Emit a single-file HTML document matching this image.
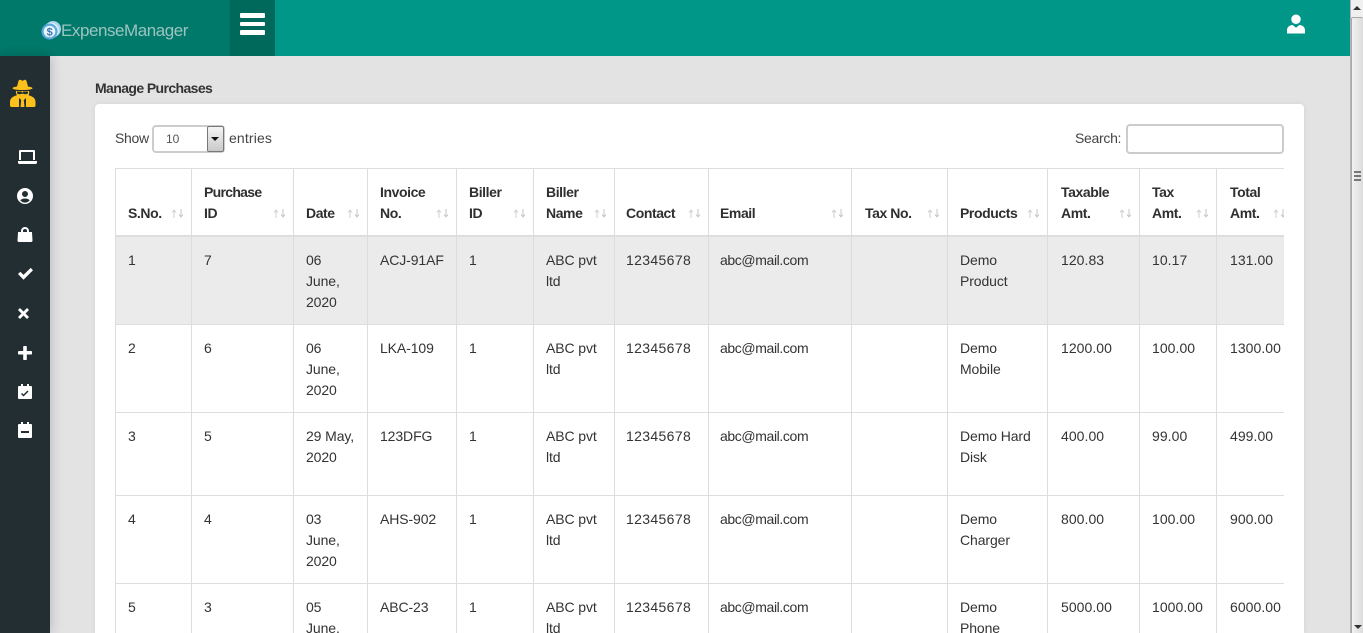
<!DOCTYPE html>
<html><head><meta charset="utf-8"><title>Manage Purchases</title>
<style>
*{box-sizing:border-box}
html,body{margin:0;padding:0;width:1363px;height:633px;overflow:hidden;background:#e3e3e3}
#root{position:relative;width:1363px;height:633px;overflow:hidden;background:#e3e3e3;font-family:"Liberation Sans",sans-serif;font-size:14px;color:#333;letter-spacing:-.3px}
.abs{position:absolute}
#top{left:0;top:0;width:1350px;height:56px;background:#009688}
#logo{left:0;top:0;width:230px;height:56px;background:#00796b}
#ham{left:230px;top:0;width:45px;height:56px;background:#00695c}
#ham i{position:absolute;left:10px;width:25px;height:4.5px;background:#fff;border-radius:1px}
#side{left:0;top:56px;width:50px;height:577px;background:#232e33;box-shadow:0 0 12px rgba(0,0,0,.22)}
#card{left:95px;top:104px;width:1209px;height:529px;background:#fff;border-radius:4px 4px 0 0;box-shadow:0 0 6px rgba(0,0,0,.08)}
#wrap{left:115px;top:168px;width:1169px;height:465px;overflow:hidden;border-left:1px solid #ddd}
table{border-collapse:separate;border-spacing:0;table-layout:fixed;width:1191px}
th,td{padding:0 0 0 12px;border-right:1px solid #ddd;text-align:left;font-size:14px;line-height:21px}
th{height:69px;border-top:1px solid #ddd;border-bottom:2px solid #ddd;vertical-align:bottom;padding-bottom:11px;position:relative;font-weight:bold;color:#2f2f2f;letter-spacing:-.42px}
td{border-bottom:1px solid #ddd;vertical-align:top;padding-top:13px;color:#333;letter-spacing:-.1px}
tr.g td{background:#ebebeb}
th svg{position:absolute;right:7px;bottom:17px;width:13px;height:9px}
td:nth-child(7){letter-spacing:.35px;padding-left:11px}
td:nth-child(8){letter-spacing:-.38px;padding-left:11px}
th:nth-child(7),th:nth-child(8){padding-left:11px}
td:nth-child(11),th:nth-child(11),td:nth-child(13),th:nth-child(13){padding-left:13px}
td:nth-child(11),td:nth-child(12),td:nth-child(13){letter-spacing:.05px}
th:nth-child(9){padding-left:13px}
#sb{left:1350px;top:0;width:13px;height:633px;background:#f0f0f0;border-left:1px solid #b4b4b4}
</style></head>
<body>
<div id="root">
<svg width="0" height="0" style="position:absolute"><defs><symbol id="sa" viewBox="0 0 13 9"><path d="M3 9V1.500M1 3.500L3 1l2 2.500" fill="none" stroke="#cfcfcf" stroke-width="1"/><path d="M10 0v7.500M8 5.500L10 8l2-2.500" fill="none" stroke="#c4c4c4" stroke-width="1"/></symbol></defs></svg>
<div class="abs" id="top"></div>
<div class="abs" id="logo"></div>
<svg class="abs" style="left:40px;top:20px" width="22" height="22" viewBox="0 0 22 22"><circle cx="13" cy="9" r="8" fill="#a9d5ee"/><circle cx="11" cy="10.500" r="8" fill="#d7ecf8"/><circle cx="9.500" cy="11.500" r="8" fill="#5aa9dd"/><circle cx="9.500" cy="11.500" r="5.800" fill="#eaf5fc"/><text x="9.500" y="15.500" font-size="11" text-anchor="middle" font-weight="bold" fill="#3a78b0" font-family="Liberation Sans">$</text></svg>
<div class="abs" style="left:61px;top:20px;font-size:17px;line-height:21px;color:#9cc4bf;letter-spacing:-.45px">ExpenseManager</div>
<div class="abs" id="ham"><i style="top:13px"></i><i style="top:21.500px"></i><i style="top:30px"></i></div>
<svg class="abs" style="left:1287px;top:14px" width="18" height="20" viewBox="0 0 19 20" fill="#fff"><circle cx="9.500" cy="5" r="5"/><path d="M0 20v-3.500C0 13 3 11 6 11l3.500 3L13 11c3 0 6 2 6 5.500V20z"/></svg>
<div class="abs" id="side"></div>
<svg class="abs" style="left:0;top:56px" width="50" height="400" viewBox="0 56 50 400" fill="#fff">
<path fill="#fcc21b" d="M17 86.500l1.500-5.500c.3-1 1.300-1.500 2.200-1l1.800.8 1.800-.8c.9-.5 1.900 0 2.200 1L28 86.500c3 .5 4.500 1.100 4.500 1.700 0 .9-3.500 1.800-10 1.800s-10-.9-10-1.800c0-.6 1.500-1.200 4.500-1.700z"/>
<path fill="#fcc21b" d="M16 91h13c.4 1.500.2 3-.5 4.300 3.500 1 7 2.500 7 6.700v3.500c0 1-.8 1.500-1.500 1.500H11.500c-.7 0-1.500-.5-1.500-1.500V102c0-4.200 3.500-5.700 7-6.700-.9-1.300-1.300-2.800-1-4.300z"/>
<path fill="#232e33" d="M17 91.500h4.500l.5 1 .5 0 .5-1H28v1.500c-.5 1.500-3 1.500-4.500.8h-2c-1.500.7-4 .7-4.500-.8zM19 98l2.200 2-.7 7h-1.500zM26 98l-2.200 2 .7 7H26z"/>
<path d="M20 150h14a1 1 0 0 1 1 1v9h-2v-8H21v8h-2v-9a1 1 0 0 1 1-1zM18 161h19v1.500c0 1-.8 1.500-1.500 1.500h-16c-.8 0-1.500-.5-1.500-1.500z"/>
<path fill-rule="evenodd" d="M25 188a8 8 0 1 1 0 16 8 8 0 0 1 0-16zm0 3a3 3 0 1 0 0 6 3 3 0 0 0 0-6zm0 7.500c-2 0-3.800.6-4.700 1.800a6 6 0 0 0 9.400 0c-.9-1.200-2.700-1.800-4.700-1.800z"/>
<path fill-rule="evenodd" d="M21 232v-1a4 4 0 0 1 8 0v1h2.500c.5 0 .5.300.5.500l.5 8c0 1-.5 1.500-1.500 1.500H19c-1 0-1.500-.5-1.500-1.500l.5-8c0-.2 0-.5.500-.5zm2 0h4v-1a2 2 0 0 0-4 0z"/>
<path d="M18 274l2.300-2.300 3.200 3.200 7.200-7 2.300 2.300-9.500 9.500z"/>
<path d="M20 308l3.500 3.500L27 308l2 2-3.500 3.500L29 317l-2 2-3.500-3.500L20 319l-2-2 3.500-3.500L18 310z"/>
<rect x="18" y="351" width="14" height="3.500" rx=".8"/><rect x="23.200" y="346" width="3.600" height="14" rx=".8"/>
<path d="M21 384h2v2h4v-2h2v2h2c.6 0 1 .4 1 1v11c0 .6-.4 1-1 1H19c-.6 0-1-.4-1-1v-11c0-.6.400-1 1-1h2z"/>
<path d="M21.500 393.500l2 2 4.500-4.500" fill="none" stroke="#232e33" stroke-width="1.500"/>
<path d="M21 422h2v2h4v-2h2v2h2c.6 0 1 .4 1 1v12c0 .6-.4 1-1 1H19c-.6 0-1-.4-1-1v-12c0-.6.400-1 1-1h2z"/>
<rect x="21" y="431" width="8" height="2" fill="#232e33"/>
</svg>
<div class="abs" style="left:95px;top:78px;font-weight:bold;font-size:14px;line-height:20px;color:#333;letter-spacing:-.6px">Manage Purchases</div>
<div class="abs" id="card"></div>
<div class="abs" style="left:115px;top:128px;line-height:20px;color:#444">Show</div>
<div class="abs" style="left:152px;top:125px;width:73px;height:28px;border:2px solid #ccc;border-radius:4px;background:#fff;font-size:12px;line-height:24px;padding-left:12px;color:#555;letter-spacing:0">10</div>
<div class="abs" style="left:207px;top:126px;width:17px;height:26px;background:linear-gradient(#f4f4f4,#c9c9c9);border:1px solid #777;border-radius:2px"><span style="position:absolute;left:3px;top:10px;border-left:4px solid transparent;border-right:4px solid transparent;border-top:4px solid #111"></span></div>
<div class="abs" style="left:229px;top:128px;line-height:20px;color:#444;letter-spacing:.15px">entries</div>
<div class="abs" style="left:1075px;top:128px;line-height:20px;color:#444">Search:</div>
<div class="abs" style="left:1126px;top:124px;width:158px;height:30px;border:2px solid #ccc;border-radius:4px;background:#fff"></div>
<div class="abs" id="wrap">
<table>
<colgroup><col style="width:76px"><col style="width:102px"><col style="width:74px"><col style="width:89px"><col style="width:77px"><col style="width:81px"><col style="width:94px"><col style="width:143px"><col style="width:96px"><col style="width:100px"><col style="width:92px"><col style="width:77px"><col style="width:90px"></colgroup>
<thead><tr>
<th>S.No.<svg><use href="#sa"/></svg></th><th><span style="letter-spacing:-.7px">Purchase</span><br>ID<svg><use href="#sa"/></svg></th><th>Date<svg><use href="#sa"/></svg></th><th>Invoice<br>No.<svg><use href="#sa"/></svg></th><th>Biller<br>ID<svg><use href="#sa"/></svg></th><th>Biller<br>Name<svg><use href="#sa"/></svg></th><th>Contact<svg><use href="#sa"/></svg></th><th>Email<svg><use href="#sa"/></svg></th><th>Tax No.<svg><use href="#sa"/></svg></th><th>Products<svg><use href="#sa"/></svg></th><th>Taxable<br>Amt.<svg><use href="#sa"/></svg></th><th>Tax<br>Amt.<svg><use href="#sa"/></svg></th><th>Total<br>Amt.<svg style="right:20px"><use href="#sa"/></svg></th>
</tr></thead>
<tbody>
<tr class="g" style="height:88px"><td>1</td><td>7</td><td>06<br>June,<br>2020</td><td>ACJ-91AF</td><td>1</td><td>ABC pvt<br>ltd</td><td>12345678</td><td>abc@mail.com</td><td></td><td>Demo<br>Product</td><td>120.83</td><td>10.17</td><td>131.00</td></tr>
<tr style="height:88px"><td>2</td><td>6</td><td>06<br>June,<br>2020</td><td>LKA-109</td><td>1</td><td>ABC pvt<br>ltd</td><td>12345678</td><td>abc@mail.com</td><td></td><td>Demo<br>Mobile</td><td>1200.00</td><td>100.00</td><td>1300.00</td></tr>
<tr style="height:83px"><td>3</td><td>5</td><td>29 May,<br>2020</td><td>123DFG</td><td>1</td><td>ABC pvt<br>ltd</td><td>12345678</td><td>abc@mail.com</td><td></td><td>Demo Hard<br>Disk</td><td>400.00</td><td>99.00</td><td>499.00</td></tr>
<tr style="height:88px"><td>4</td><td>4</td><td>03<br>June,<br>2020</td><td>AHS-902</td><td>1</td><td>ABC pvt<br>ltd</td><td>12345678</td><td>abc@mail.com</td><td></td><td>Demo<br>Charger</td><td>800.00</td><td>100.00</td><td>900.00</td></tr>
<tr style="height:88px"><td>5</td><td>3</td><td>05<br>June,<br>2020</td><td>ABC-23</td><td>1</td><td>ABC pvt<br>ltd</td><td>12345678</td><td>abc@mail.com</td><td></td><td>Demo<br>Phone</td><td>5000.00</td><td>1000.00</td><td>6000.00</td></tr>
</tbody></table>
</div>
<div class="abs" id="sb">
<span style="position:absolute;left:2px;top:6px;border-left:4px solid transparent;border-right:4px solid transparent;border-bottom:4px solid #333"></span>
<div style="position:absolute;left:0;top:17px;width:12px;height:616px;background:linear-gradient(90deg,#f2f2f2,#dcdcdc);border-left:1px solid #a9a9a9;border-top:1px solid #a9a9a9;border-radius:2px 2px 0 0"></div>
<div style="position:absolute;left:3px;top:171px;width:7px;height:10px;border-top:2px solid #777;border-bottom:2px solid #777"><div style="height:2px;margin-top:2px;background:#777"></div></div>
<span style="position:absolute;left:3px;top:625px;border-left:4px solid transparent;border-right:4px solid transparent;border-top:4px solid #333"></span>
</div>
</div>
</body></html>
